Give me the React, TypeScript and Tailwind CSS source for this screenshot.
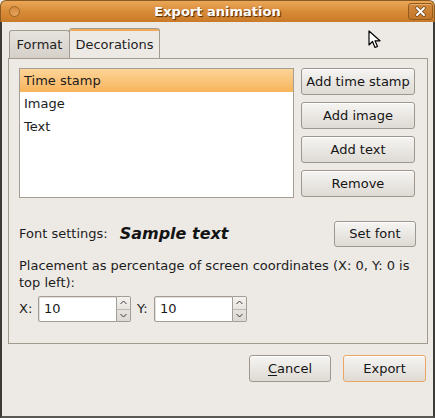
import { useState } from "react";

type Decoration = {
  id: string;
  label: string;
};

const decorations: Decoration[] = [
  { id: "timestamp", label: "Time stamp" },
  { id: "image", label: "Image" },
  { id: "text", label: "Text" },
];

const font = "font-['DejaVu_Sans','Liberation_Sans',sans-serif]";

const buttonBase =
  "flex items-center justify-center rounded-[3px] border bg-gradient-to-b from-[#f6f5f3] to-[#dedad4] text-[13px] text-[#151515] shadow-[inset_0_1px_0_#ffffff]";

function GtkButton({
  label,
  className,
  accent,
}: {
  label: React.ReactNode;
  className: string;
  accent?: boolean;
}) {
  return (
    <button
      type="button"
      className={`${buttonBase} ${
        accent ? "border-[#e9a763]" : "border-[#9d978f]"
      } ${className}`}
    >
      {label}
    </button>
  );
}

function SpinEntry({ value }: { value: string }) {
  return (
    <div className="flex h-[26px]">
      <div className="flex h-full w-[79px] items-center rounded-l-[2px] border border-[#a39d95] bg-white pl-[5px] text-[13px] text-[#1a1a1a] shadow-[inset_1px_1px_0_#e3e0dc]">
        {value}
      </div>
      <div className="flex h-full w-[14px] flex-col rounded-r-[2px] border border-l-0 border-[#a39d95] bg-gradient-to-b from-[#f3f1ee] to-[#dcd8d2]">
        <div className="flex flex-1 items-center justify-center border-b border-[#bdb7b0]">
          <svg width="7" height="5" viewBox="0 0 7 5">
            <path d="M0.5 4 L3.5 1 L6.5 4" fill="none" stroke="#3a3a3a" strokeWidth="1" />
          </svg>
        </div>
        <div className="flex flex-1 items-center justify-center">
          <svg width="7" height="5" viewBox="0 0 7 5">
            <path d="M0.5 1 L3.5 4 L6.5 1" fill="none" stroke="#3a3a3a" strokeWidth="1" />
          </svg>
        </div>
      </div>
    </div>
  );
}

export default function App() {
  const [selected, setSelected] = useState("timestamp");

  return (
    <div
      className={`relative flex h-[418px] w-[435px] flex-col overflow-hidden bg-[#edeae6] ${font}`}
    >
      {/* title bar */}
      <div className="relative flex h-[22px] shrink-0 items-center justify-center rounded-t-[6px] border border-b-0 border-[#8a5a20] bg-gradient-to-b from-[#eaa657] via-[#d98c38] to-[#c97a28]">
        <div className="absolute left-[8px] top-[5px] h-[11px] w-[11px] rounded-full border border-[#9a6526] bg-gradient-to-b from-[#d38a3c] to-[#e6a45c]" />
        <span className="text-[13px] font-bold text-white [text-shadow:1px_1px_1px_#4a2a08]">
          Export animation
        </span>
        <div className="absolute right-[1px] top-[2px] flex h-[17px] w-[25px] items-center justify-center rounded-[3px] border border-[#8f5b1f] bg-gradient-to-b from-[#d38a3c] to-[#c47628] shadow-[inset_0_1px_0_#e8ad6a]">
          <svg width="11" height="11" viewBox="0 0 11 11">
            <path d="M2 2 L9 9 M9 2 L2 9" stroke="#6b4215" strokeWidth="3.2" strokeLinecap="round" />
            <path d="M2 2 L9 9 M9 2 L2 9" stroke="#ffffff" strokeWidth="2" strokeLinecap="round" />
          </svg>
        </div>
      </div>

      {/* window body */}
      <div className="flex flex-1 flex-col border-x-2 border-b-2 border-x-[#3c3b37] border-b-[#5a5954]">
        {/* tabs */}
        <div className="flex h-[36px] items-end pl-[7px] pt-[6px]">
          <div className="flex h-[28px] w-[61px] items-center justify-center rounded-t-[3px] border border-b-0 border-[#a39b90] bg-gradient-to-b from-[#e6e2dd] to-[#d5d0c9] text-[13px] text-[#1e1e1e]">
            Format
          </div>
          <div className="-ml-px flex h-[30px] w-[91px] flex-col rounded-t-[3px] border border-b-0 border-[#a39b90] bg-[#edeae6]">
            <div className="h-[2px] rounded-t-[2px] bg-[#f0a95a]" />
            <div className="flex flex-1 items-center justify-center text-[13px] text-[#1e1e1e]">
              Decorations
            </div>
          </div>
        </div>

        {/* notebook panel */}
        <div className="ml-[6px] mr-[5px] flex h-[286px] flex-col border border-[#a39b90] pl-[10px] pr-[11px] pt-[9px]">
          <div className="flex gap-[7px]">
            <div className="h-[130px] w-[275px] border border-[#a59e95] bg-white">
              {decorations.map((d) => (
                <div
                  key={d.id}
                  onClick={() => setSelected(d.id)}
                  className={`flex h-[23px] items-center pl-[4px] text-[13px] text-[#1c1c1c] ${
                    selected === d.id
                      ? "bg-gradient-to-b from-[#fdd497] to-[#f7b45a]"
                      : ""
                  }`}
                >
                  {d.label}
                </div>
              ))}
            </div>
            <div className="flex flex-col gap-[7px]">
              <GtkButton label="Add time stamp" className="h-[27px] w-[114px]" />
              <GtkButton label="Add image" className="h-[27px] w-[114px]" />
              <GtkButton label="Add text" className="h-[27px] w-[114px]" />
              <GtkButton label="Remove" className="h-[27px] w-[114px]" />
            </div>
          </div>

          <div className="mt-[23px] flex h-[26px] items-center">
            <span className="text-[13px] text-[#1c1c1c]">Font settings:</span>
            <span className="ml-[12px] text-[16px] font-bold italic text-[#141414]">
              Sample text
            </span>
            <GtkButton label="Set font" className="ml-auto h-[26px] w-[82px]" />
          </div>

          <p className="mt-[10px] text-[13px] leading-[17px] text-[#1c1c1c]">
            Placement as percentage of screen coordinates (X: 0, Y: 0 is top left):
          </p>

          <div className="mt-[5px] flex items-center">
            <span className="w-[19px] text-[13px] text-[#1c1c1c]">X:</span>
            <SpinEntry value="10" />
            <span className="ml-[6px] w-[17px] text-[13px] text-[#1c1c1c]">Y:</span>
            <SpinEntry value="10" />
          </div>
        </div>

        {/* dialog buttons */}
        <div className="mt-[11px] flex justify-end gap-[12px] pr-[7px]">
          <GtkButton
            label={
              <span>
                <span className="underline underline-offset-2">C</span>ancel
              </span>
            }
            className="h-[27px] w-[82px]"
          />
          <GtkButton label="Export" accent className="h-[27px] w-[83px]" />
        </div>
      </div>

      {/* mouse pointer */}
      <svg
        className="absolute left-[368px] top-[30px]"
        width="14"
        height="19"
        viewBox="0 0 14 19"
      >
        <path
          d="M1 1 L1 15 L4.5 11.5 L7 17.5 L9.5 16.5 L7 10.8 L12 10.8 Z"
          fill="#ffffff"
          stroke="#000000"
          strokeWidth="1.2"
          strokeLinejoin="round"
        />
      </svg>
    </div>
  );
}
